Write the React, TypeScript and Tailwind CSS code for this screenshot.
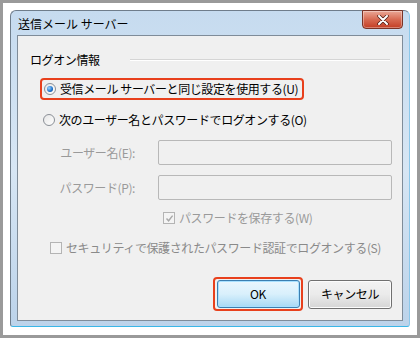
import React from "react";

const font = { fontFamily: '"Noto Sans CJK JP", "Noto Sans", sans-serif' };

function Radio({ checked }: { checked?: boolean }) {
  return (
    <span className="relative flex h-[12px] w-[12px] shrink-0 items-center justify-center rounded-full border border-[#8a8f96] bg-gradient-to-br from-[#e6e6e6] to-[#ffffff]">
      {checked && (
        <span className="h-[6px] w-[6px] rounded-full bg-[radial-gradient(circle_at_35%_35%,#9fd6ff,#1a6fc9_60%,#0d3f80)]" />
      )}
    </span>
  );
}

function Check({ checked }: { checked?: boolean }) {
  return (
    <span className="flex h-[12px] w-[12px] shrink-0 items-center justify-center border border-[#b4b4b4] bg-[#f4f4f4]">
      {checked && (
        <svg width="9" height="9" viewBox="0 0 9 9">
          <path d="M1.5 4.5 L3.6 6.8 L7.6 1.6" stroke="#a8a8a8" strokeWidth="1.4" fill="none" />
        </svg>
      )}
    </span>
  );
}

export default function App() {
  return (
    <div
      className="h-[338px] w-[420px] overflow-hidden border-[3px] border-[#9a9a9a] bg-white pl-[7px] pt-[7px]"
      style={font}
    >
      <div className="relative flex h-[317px] w-[400px] flex-col rounded-t-[6px] rounded-b-[3px] border border-[#6f7d8b] border-b-[#3ab6e6] border-r-[#8cc8ea] bg-gradient-to-b from-[#c6dbef] via-[#d7e6f4] to-[#bcd3ea] px-[6px] pb-[5px]">
        {/* title bar */}
        <div className="flex h-[24px] shrink-0 items-center pl-[1px] pt-[1px]">
          <span className="whitespace-nowrap text-[12px] leading-none text-black">送信メール サーバー</span>
        </div>
        {/* close button */}
        <div className="absolute right-[6px] top-[-1px] flex h-[19px] w-[41px] items-center justify-center rounded-b-[4px] border border-[#7a3326] bg-gradient-to-b from-[#e9a796] via-[#d76a52] to-[#c33c22] shadow-[inset_0_0_0_1px_rgba(255,255,255,0.35)]">
          <svg width="12" height="10" viewBox="0 0 12 10">
            <path d="M2 1 L10 9 M10 1 L2 9" stroke="#4a1a12" strokeWidth="3.4" strokeLinecap="round" />
            <path d="M2 1 L10 9 M10 1 L2 9" stroke="#ffffff" strokeWidth="2" strokeLinecap="round" />
          </svg>
        </div>
        {/* client area */}
        <div className="flex flex-1 flex-col whitespace-nowrap border border-[#7f8c99] bg-[#f0f0f0] text-[12px] leading-none tracking-[-0.4px]">
          {/* group header */}
          <div className="mt-[14px] flex h-[20px] items-center pl-[12px] pr-[12px]">
            <span className="text-black">ログオン情報</span>
            <div className="ml-[30px] flex-1 border-t border-[#d5d5d5] border-b border-b-white" />
          </div>
          {/* radio 1 */}
          <div className="ml-[22px] mt-[8px] flex h-[22px] w-[264px] items-center gap-[4px] rounded-[4px] border-2 border-[#e8401c] pl-[2px]">
            <Radio checked />
            <span className="text-black">受信メール サーバーと同じ設定を使用する(U)</span>
          </div>
          {/* radio 2 */}
          <div className="ml-[25px] mt-[10px] flex h-[20px] items-center gap-[4px]">
            <Radio />
            <span className="text-black">次のユーザー名とパスワードでログオンする(O)</span>
          </div>
          {/* user */}
          <div className="mt-[10px] flex h-[25px] items-center">
            <span className="w-[117px] text-right text-[#9a9a9a]">ユーザー名(E):</span>
            <div className="ml-[23px] h-[25px] w-[234px] rounded-[2px] border border-[#b8b8b8] bg-[#f0f0f0]" />
          </div>
          {/* password */}
          <div className="mt-[10px] flex h-[25px] items-center">
            <span className="w-[117px] text-right text-[#9a9a9a]">パスワード(P):</span>
            <div className="ml-[23px] h-[25px] w-[234px] rounded-[2px] border border-[#b8b8b8] bg-[#f0f0f0]" />
          </div>
          {/* save password */}
          <div className="ml-[145px] mt-[10px] flex h-[16px] items-center gap-[4px]">
            <Check checked />
            <span className="text-[#9a9a9a]">パスワードを保存する(W)</span>
          </div>
          {/* secure */}
          <div className="ml-[32px] mt-[14px] flex h-[16px] items-center gap-[4px]">
            <Check />
            <span className="text-[#8a8a8a]">セキュリティで保護されたパスワード認証でログオンする(S)</span>
          </div>
          {/* buttons */}
          <div className="ml-[195px] mt-[21px] flex items-center gap-[5px]">
            <div className="flex h-[34px] w-[90px] items-center justify-center rounded-[4px] border-2 border-[#e8401c]">
              <div className="flex h-[28px] w-[83px] items-center justify-center rounded-[3px] border border-[#3c7fb1] bg-gradient-to-b from-[#eaf6fd] via-[#d9f0fc] to-[#a7d9f5] shadow-[inset_0_0_0_1px_#a8e0ff]">
                <span className="text-black">OK</span>
              </div>
            </div>
            <div className="flex h-[29px] w-[84px] items-center justify-center rounded-[3px] border border-[#707070] bg-gradient-to-b from-[#f2f2f2] via-[#ebebeb] to-[#d5d5d5] shadow-[inset_0_0_0_1px_#fcfcfc]">
              <span className="text-black">キャンセル</span>
            </div>
          </div>
        </div>
      </div>
    </div>
  );
}
